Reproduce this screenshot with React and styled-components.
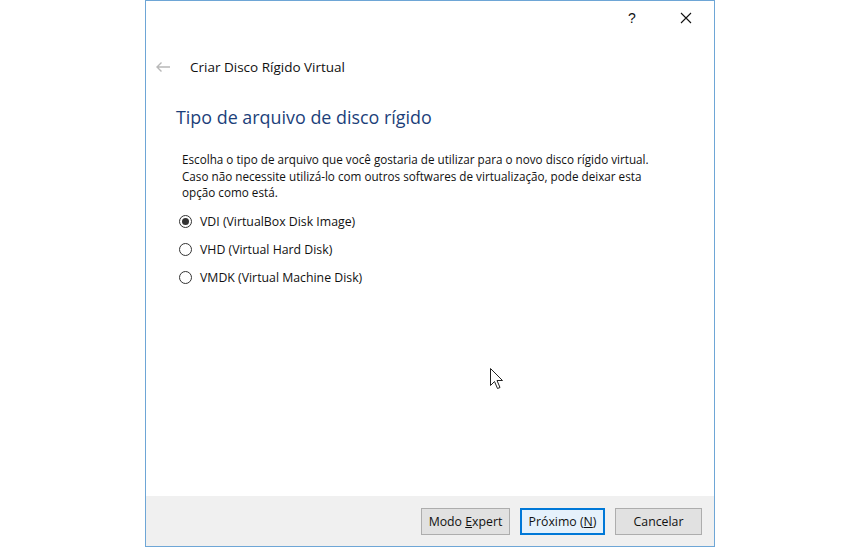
import React from "react";
import styled, { createGlobalStyle } from "styled-components";

const GlobalStyle = createGlobalStyle`
  html, body {
    margin: 0;
    padding: 0;
    background: #ffffff;
  }
  body {
    font-family: "Open Sans", "Noto Sans", sans-serif;
    font-size: 12px;
    color: #000;
  }
`;

const Page = styled.div`
  width: 860px;
  height: 547px;
  position: relative;
  overflow: hidden;
`;

const Window = styled.div`
  margin-left: 145px;
  width: 570px;
  height: 547px;
  box-sizing: border-box;
  border: 1px solid #6ea6d6;
  display: flex;
  flex-direction: column;
  background: #fff;
`;

const TitleBar = styled.div`
  height: 33px;
  display: flex;
  justify-content: flex-end;
  align-items: center;
  padding-right: 20px;
  gap: 38px;
`;

const TitleButton = styled.span`
  font-family: "Liberation Sans", sans-serif;
  font-size: 14px;
  color: #111;
  width: 16px;
  text-align: center;
  display: flex;
  justify-content: center;
`;

const Header = styled.div`
  display: flex;
  align-items: center;
  height: 20px;
  margin-top: 23px;
  padding-left: 9px;
  gap: 19px;
`;

const HeaderText = styled.span`
  font-size: 13.5px;
  color: #111;
`;

const Body = styled.div`
  flex: 1;
  padding-left: 30px;
  padding-right: 10px;
`;

const Heading = styled.h1`
  margin: 28px 0 0 0;
  font-weight: 400;
  font-size: 17.9px;
  line-height: 24px;
  color: #1c3f7a;
`;

const Intro = styled.p`
  margin: 22px 0 0 6px;
  font-size: 11.7px;
  line-height: 16.5px;
  color: #111;
  white-space: nowrap;
`;

const Options = styled.div`
  display: flex;
  flex-direction: column;
  gap: 8px;
  margin: 11px 0 0 3px;
`;

const Option = styled.label`
  display: flex;
  align-items: center;
  gap: 8px;
  height: 20px;
  font-size: 12.3px;
  color: #111;
`;

const Radio = styled.span`
  width: 11px;
  height: 11px;
  border-radius: 50%;
  border: 1px solid #333;
  display: flex;
  align-items: center;
  justify-content: center;
  box-sizing: content-box;

  &::after {
    content: "";
    width: 7px;
    height: 7px;
    border-radius: 50%;
    background: ${(p) => (p.checked ? "#333" : "transparent")};
  }
`;

const Footer = styled.div`
  height: 49px;
  background: #f0f0f0;
  display: flex;
  justify-content: flex-end;
  align-items: center;
  gap: 10px;
  padding-right: 12px;
  padding-top: 1px;
`;

const Button = styled.button`
  font-family: "Open Sans", "Noto Sans", sans-serif;
  font-size: 12.3px;
  color: #111;
  height: 27px;
  width: ${(p) => p.width}px;
  background: ${(p) => (p.primary ? "#e5f1fb" : "#e1e1e1")};
  border: 1px solid ${(p) => (p.primary ? "#0078d7" : "#adadad")};
  box-shadow: ${(p) => (p.primary ? "inset 0 0 0 1px #0078d7" : "none")};
  padding: 0;
  cursor: default;

  u {
    text-decoration: underline;
  }
`;

const Cursor = styled.svg`
  position: absolute;
  left: 490px;
  top: 368px;
`;

const BackArrow = () => (
  <svg width="16" height="12" viewBox="0 0 16 12">
    <path
      d="M15 6H2M6.5 1.5L2 6l4.5 4.5"
      fill="none"
      stroke="#b8b8b8"
      strokeWidth="1.4"
    />
  </svg>
);

const CloseIcon = () => (
  <svg width="12" height="12" viewBox="0 0 12 12">
    <path d="M1 1l10 10M11 1L1 11" stroke="#111" strokeWidth="1.1" />
  </svg>
);

const options = [
  { id: "vdi", label: "VDI (VirtualBox Disk Image)", checked: true },
  { id: "vhd", label: "VHD (Virtual Hard Disk)" },
  { id: "vmdk", label: "VMDK (Virtual Machine Disk)" },
];

export default function App() {
  return (
    <Page>
      <GlobalStyle />
      <Window>
        <TitleBar>
          <TitleButton>?</TitleButton>
          <TitleButton>
            <CloseIcon />
          </TitleButton>
        </TitleBar>
        <Header>
          <BackArrow />
          <HeaderText>Criar Disco Rígido Virtual</HeaderText>
        </Header>
        <Body>
          <Heading>Tipo de arquivo de disco rígido</Heading>
          <Intro>
            Escolha o tipo de arquivo que você gostaria de utilizar para o novo
            disco rígido virtual.
            <br />
            Caso não necessite utilizá-lo com outros softwares de virtualização,
            pode deixar esta
            <br />
            opção como está.
          </Intro>
          <Options>
            {options.map((o) => (
              <Option key={o.id}>
                <Radio checked={o.checked} />
                {o.label}
              </Option>
            ))}
          </Options>
        </Body>
        <Footer>
          <Button width={89}>
            Modo <u>E</u>xpert
          </Button>
          <Button width={85} primary>
            Próximo (<u>N</u>)
          </Button>
          <Button width={87}>Cancelar</Button>
        </Footer>
      </Window>
      <Cursor width="13" height="21" viewBox="0 0 13 21">
        <path
          d="M0.5 0.5V17.5L4.5 13.5L7.5 20.5L10 19.5L7 12.5H12.5Z"
          fill="#fff"
          stroke="#222"
          strokeWidth="1"
        />
      </Cursor>
    </Page>
  );
}
